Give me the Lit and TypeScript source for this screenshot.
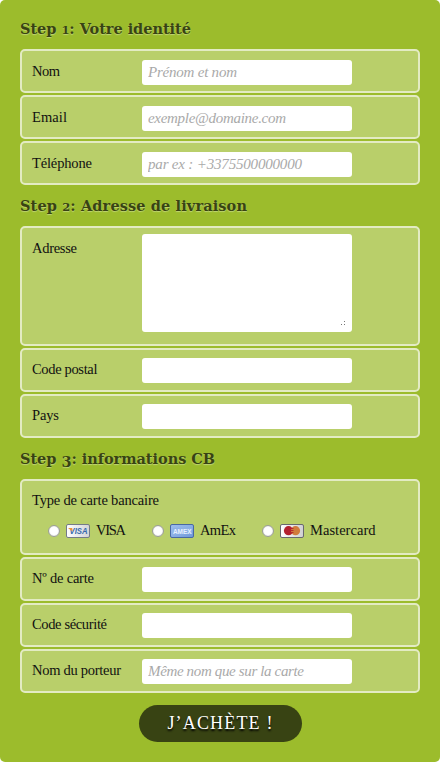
import { LitElement, html, css, svg, nothing } from "lit";
import { customElement } from "lit/decorators.js";
import { styleMap } from "lit/directives/style-map.js";

const SERIF = 'Georgia, "Liberation Serif", serif';
const HEADING = 'Georgia, "DejaVu Serif", serif';
const ctx = document.createElement("canvas").getContext("2d")!;

/* Letter spacing that sets a run of text to the given measure. */
function track(text: string, font: string, width: number, family = SERIF): string {
  ctx.font = `${font} ${family}`;
  const n = Math.max(1, text.length - 1);
  return ((width - ctx.measureText(text).width) / n).toFixed(3) + "px";
}

interface Field {
  label: string;
  width: number;
  hint?: string;
  hintWidth?: number;
  area?: boolean;
}

const identity: Field[] = [
  { label: "Nom", width: 28, hint: "Prénom et nom", hintWidth: 89 },
  { label: "Email", width: 35, hint: "exemple@domaine.com", hintWidth: 138 },
  { label: "Téléphone", width: 60, hint: "par ex : +3375500000000", hintWidth: 154 },
];
const delivery: Field[] = [
  { label: "Adresse", width: 45, area: true },
  { label: "Code postal", width: 65.5 },
  { label: "Pays", width: 27 },
];
const card: Field[] = [
  { label: "Nº de carte", width: 62 },
  { label: "Code sécurité", width: 75 },
  { label: "Nom du porteur", width: 89, hint: "Même nom que sur la carte", hintWidth: 156 },
];

const visa = svg`
  <defs><linearGradient id="v" x2="1"><stop offset="0" stop-color="#fff"/><stop offset="1" stop-color="#d3d3d6"/></linearGradient></defs>
  <rect x=".5" y=".5" width="23" height="13" rx="1.5" fill="url(#v)" stroke="#747b88"/>
  <text x="3.5" y="10.2" class="mark visa" textLength="18" lengthAdjust="spacingAndGlyphs">VISA</text>
  <path d="M2 4h4.2l.4 3.4z" fill="#e9953b"/>`;
const amex = svg`
  <defs><linearGradient id="a" x2="1" y2="1"><stop offset="0" stop-color="#9dbdec"/><stop offset=".5" stop-color="#8aafe5"/><stop offset="1" stop-color="#6c96d8"/></linearGradient></defs>
  <rect x=".5" y=".5" width="23" height="13" rx="1.5" fill="url(#a)" stroke="#4869a4"/>
  <rect x="3" y="4" width="19" height="6" fill="#8db0e6"/>
  <text x="3" y="9.6" class="mark amex" textLength="18.5" lengthAdjust="spacingAndGlyphs">AMEX</text>`;
const master = svg`
  <defs><linearGradient id="m" x2="1"><stop offset="0" stop-color="#fff"/><stop offset="1" stop-color="#cfcfd2"/></linearGradient></defs>
  <rect x=".5" y=".5" width="23" height="13" rx="1.5" fill="url(#m)" stroke="#68696e"/>
  <circle cx="8.5" cy="6.7" r="4.6" fill="#b3202f"/>
  <circle cx="15.5" cy="6.7" r="4.6" fill="#d17b3c"/>
  <path d="M10.5 4.5h3M10.5 6.5h3M10.5 8.5h3" stroke="#b3202f" stroke-width=".9"/>`;

@customElement("app-root")
export class AppRoot extends LitElement {
  static styles = css`
    :host { display: block; height: 762px; background: #fff; font-family: Georgia, "Liberation Serif", serif; }
    * { box-sizing: border-box; }
    form { display: flex; flex-direction: column; height: 762px; padding: 0 20px; background: #9cbc2c; border-radius: 5px; }
    h2 { margin: 0; height: 41px; padding-top: 11px; font: bold 14.5px/20px Georgia, "DejaVu Serif", serif; color: #384313; text-shadow: 0 1px 1px #c0d576; white-space: nowrap; }
    h2.first { height: 49px; padding-top: 19px; }
    .digit { display: inline-block; line-height: 0; }
    .small { font-size: 11.5px; }
    .low { position: relative; top: 3px; }
    .rows { display: grid; gap: 2px; }
    .row { display: flex; align-items: flex-start; height: 44px; padding: 8px 10px 0; background: #b9cf6a; border: 2px solid #e3ebc3; border-radius: 5px; }
    .identity .row { padding-top: 9px; }
    .row.tall { height: 120px; padding-top: 6px; }
    label, .legend, .card { font-size: 14.5px; line-height: 18px; color: #111; white-space: nowrap; }
    .row > label { width: 110px; padding-top: 2px; }
    .row.tall > label { padding-top: 5px; }
    input.text, textarea { display: block; width: 210px; height: 25px; margin: 0; border: 0; outline: 0; border-radius: 3px; background: #fff; padding: 0 6px 1px; font: italic 15px Georgia, "Liberation Serif", serif; }
    ::placeholder { color: #a9a9a9; opacity: 1; }
    .area { display: grid; width: 210px; height: 98px; }
    .area > * { grid-area: 1 / 1; }
    textarea { height: 98px; resize: none; }
    .grip { align-self: end; justify-self: end; width: 4px; height: 4px; margin: 0 7px 7px; z-index: 1; }
    .row.cards { flex-direction: column; height: 76px; padding-top: 10px; }
    .options { display: grid; grid-template-columns: 104px 110px auto; margin: 12px 0 0 16px; }
    .card { display: flex; align-items: center; height: 18px; }
    .radio { appearance: none; flex: none; width: 12px; height: 12px; margin: 1px 6px 0 0; border: 1px solid #999d91; border-radius: 50%; background: #fff; box-shadow: inset 0 0 1px #aaa; }
    .logo { flex: none; width: 24px; height: 14px; margin: 1px 6px 0 0; }
    .mark { font-family: "Liberation Sans", sans-serif; font-weight: bold; letter-spacing: 0; }
    .visa { font-size: 9px; font-style: italic; fill: #3768ac; }
    .amex { font-size: 7.5px; fill: #e6f0ff; }
    button { align-self: center; width: 163px; height: 37px; margin: 12px 0 0 1px; padding: 0; border: 0; border-radius: 20px; background: #384313; color: #fff; font: 18px/37px Georgia, "Liberation Serif", serif; text-shadow: 0 2px 2px #000; white-space: nowrap; }
  `;

  private label(text: string, width: number) {
    return html`<span style=${styleMap({ letterSpacing: track(text, "14.5px", width) })}>${text}</span>`;
  }

  /* Headings use old-style figures: 1 and 2 at x-height, 3 hanging below the baseline. */
  private heading(n: number, text: string, width: number, cls = "") {
    const spacing = track(`Step ${n}: ${text}`, "bold 14.5px", width, HEADING);
    return html`<h2 class=${cls} style=${styleMap({ letterSpacing: spacing })}>Step <span class="digit ${n < 3 ? "small" : "low"}">${n}</span>: ${text}</h2>`;
  }

  private field(f: Field) {
    const style = f.hint ? styleMap({ letterSpacing: track(f.hint, "italic 15px", f.hintWidth!) }) : nothing;
    return html`<div class="row ${f.area ? "tall" : ""}">
      <label>${this.label(f.label, f.width)}</label>
      ${f.area
        ? html`<div class="area"><textarea></textarea><svg class="grip" viewBox="0 0 4 4"><path d="M0 3h1v1H0zM3 3h1v1H3zM3 0h1v1H3z" fill="#777"/></svg></div>`
        : html`<input class="text" placeholder=${f.hint ?? ""} style=${style} />`}
    </div>`;
  }

  private card(name: string, width: number, logo: unknown) {
    return html`<label class="card"><input class="radio" type="radio" name="card" />
      <svg class="logo" viewBox="0 0 24 14">${logo}</svg>${this.label(name, width)}</label>`;
  }

  render() {
    return html`<form>
      ${this.heading(1, "Votre identité", 173, "first")}
      <div class="rows identity">${identity.map((f) => this.field(f))}</div>
      ${this.heading(2, "Adresse de livraison", 229)}
      <div class="rows">${delivery.map((f) => this.field(f))}</div>
      ${this.heading(3, "informations CB", 195)}
      <div class="rows">
        <div class="row cards">
          <div class="legend">${this.label("Type de carte bancaire", 127)}</div>
          <div class="options">
            ${this.card("VISA", 30, visa)}${this.card("AmEx", 36, amex)}${this.card("Mastercard", 65.5, master)}
          </div>
        </div>
        ${card.map((f) => this.field(f))}
      </div>
      <button type="button" style=${styleMap({ letterSpacing: track("J’ACHÈTE !", "18px", 105) })}>J’ACHÈTE !</button>
    </form>`;
  }
}
